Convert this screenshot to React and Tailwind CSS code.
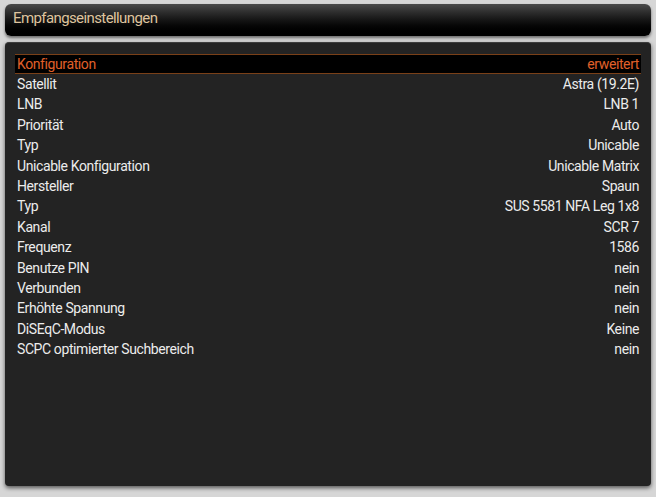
import React from 'react';

const rows = [
  ['Konfiguration', 'erweitert'],
  ['Satellit', 'Astra (19.2E)'],
  ['LNB', 'LNB 1'],
  ['Priorität', 'Auto'],
  ['Typ', 'Unicable'],
  ['Unicable Konfiguration', 'Unicable Matrix'],
  ['Hersteller', 'Spaun'],
  ['Typ', 'SUS 5581 NFA Leg 1x8'],
  ['Kanal', 'SCR 7'],
  ['Frequenz', '1586'],
  ['Benutze PIN', 'nein'],
  ['Verbunden', 'nein'],
  ['Erhöhte Spannung', 'nein'],
  ['DiSEqC-Modus', 'Keine'],
  ['SCPC optimierter Suchbereich', 'nein'],
];

export default function App() {
  return (
    <div
      className="w-[656px] h-[497px] bg-[#d6d6d6] px-[5px] pt-[4px] pb-[11px] flex flex-col gap-[6px] overflow-hidden"
      style={{ fontFamily: 'Roboto, "Liberation Sans", sans-serif' }}
    >
      {/* Header */}
      <div className="h-[32px] shrink-0 rounded-[6px] bg-gradient-to-b from-[#4a4a4a] via-[#151515] to-black shadow-[0_2px_3px_rgba(0,0,0,0.5)] px-[8px] pt-[2px]">
        <span className="text-[15px] tracking-[-0.6px] text-[#dfc49e]">Empfangseinstellungen</span>
      </div>

      {/* Panel */}
      <div className="flex-1 rounded-[4px] bg-[#232323] border-t border-[#3c3c3c] shadow-[0_2px_4px_rgba(0,0,0,0.6)] px-[10px] pt-[11px]">
        {rows.map(([label, value], i) => (
          <div
            key={i}
            className={
              i === 0
                ? 'h-[20.4px] flex items-center justify-between px-[2px] bg-black border-y border-[#7a4018] text-[#e0602a] text-[14px] tracking-[-0.4px]'
                : 'h-[20.4px] flex items-center justify-between px-[2px] text-[#ececec] text-[14px] tracking-[-0.4px]'
            }
          >
            <span>{label}</span>
            <span>{value}</span>
          </div>
        ))}
      </div>
    </div>
  );
}
